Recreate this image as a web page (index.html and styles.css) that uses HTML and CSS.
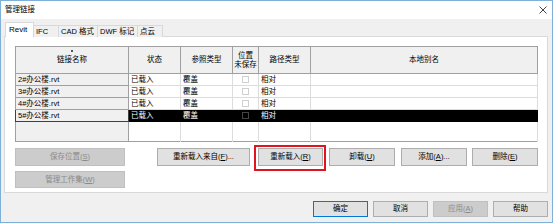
FILE: index.html
```html
<!DOCTYPE html>
<html lang="zh">
<head>
<meta charset="utf-8">
<title>管理链接</title>
<link rel="stylesheet" href="styles.css">
</head>
<body>
<div class="window">
  <div class="titlebar">
    <span class="title">管理链接</span>
    <svg class="close" width="8" height="8" viewBox="0 0 8 8"><path d="M0.5 0.5 L7.5 7.5 M7.5 0.5 L0.5 7.5" stroke="#444" stroke-width="1" fill="none"/></svg>
  </div>
  <div class="body">
    <div class="tabs">
      <div class="tab active t-revit">Revit</div>
      <div class="tab t-ifc">IFC</div>
      <div class="tab t-cad">CAD 格式</div>
      <div class="tab t-dwf">DWF 标记</div>
      <div class="tab t-pc">点云</div>
    </div>
    <div class="panel">
      <table class="grid">
        <colgroup>
          <col class="c-name"><col class="c-status"><col class="c-ref"><col class="c-pos"><col class="c-path"><col class="c-alias">
        </colgroup>
        <thead>
          <tr>
            <th class="h-name"><span class="sortdot"></span>链接名称</th>
            <th>状态</th>
            <th>参照类型</th>
            <th class="h-pos">位置<br>未保存</th>
            <th>路径类型</th>
            <th>本地别名</th>
          </tr>
        </thead>
        <tbody>
          <tr>
            <td class="name">2#办公楼.rvt</td><td>已载入</td><td>覆盖</td><td class="chk"><span class="box"></span></td><td>相对</td><td></td>
          </tr>
          <tr>
            <td class="name">3#办公楼.rvt</td><td>已载入</td><td>覆盖</td><td class="chk"><span class="box"></span></td><td>相对</td><td></td>
          </tr>
          <tr>
            <td class="name">4#办公楼.rvt</td><td>已载入</td><td>覆盖</td><td class="chk"><span class="box"></span></td><td>相对</td><td></td>
          </tr>
          <tr class="selected">
            <td class="name">5#办公楼.rvt</td><td>已载入</td><td>覆盖</td><td class="chk"><span class="box"></span></td><td>相对</td><td></td>
          </tr>
          <tr class="filler">
            <td class="name"></td><td></td><td></td><td></td><td></td><td></td>
          </tr>
        </tbody>
      </table>
      <div class="actions">
        <div class="leftcol">
          <button class="btn wide" disabled>保存位置(<u>S</u>)</button>
          <button class="btn wide" disabled>管理工作集(<u>W</u>)</button>
        </div>
        <div class="rightrow">
          <button class="btn b-from">重新载入来自(<u>F</u>)...</button>
          <button class="btn b-reload highlight">重新载入(<u>R</u>)</button>
          <button class="btn b-std">卸载(<u>U</u>)</button>
          <button class="btn b-std">添加(<u>A</u>)...</button>
          <button class="btn b-std b-del">删除(<u>E</u>)</button>
        </div>
      </div>
    </div>
    <div class="footer">
      <button class="btn fbtn default">确定</button>
      <button class="btn fbtn">取消</button>
      <button class="btn fbtn" disabled>应用(<u>A</u>)</button>
      <button class="btn fbtn">帮助</button>
    </div>
  </div>
</div>
</body>
</html>
```

FILE: styles.css
```css
html, body {
  margin: 0;
  padding: 0;
  background: #ffffff;
}

.window {
  width: 553px;
  height: 223px;
  box-sizing: border-box;
  border: 1px solid #7fb0da;
  display: flex;
  flex-direction: column;
  font-family: "Liberation Sans", "Noto Sans CJK SC", sans-serif;
  font-size: 8px;
  color: #000;
}

.titlebar {
  height: 18px;
  flex: 0 0 18px;
  background: #ffffff;
  display: flex;
  align-items: center;
  justify-content: space-between;
  padding: 0 5px 0 4px;
}

.title {
  font-size: 7.5px;
  line-height: 1;
}

.close {
  display: block;
}

.body {
  flex: 1;
  background: #f0f0f0;
  display: flex;
  flex-direction: column;
  padding: 4px 4px 0 3px;
}

.tabs {
  display: flex;
  align-items: flex-end;
  height: 14px;
  padding-left: 1px;
  position: relative;
  z-index: 1;
  margin-bottom: -1px;
}

.tab {
  box-sizing: border-box;
  height: 12px;
  line-height: 11px;
  padding-left: 2px;
  border: 1px solid #d9d9d9;
  border-bottom: none;
  border-left: none;
  background: #f0f0f0;
  white-space: nowrap;
  overflow: hidden;
  font-size: 7.5px;
}

.tab.active {
  height: 15px;
  line-height: 13px;
  background: #ffffff;
  border-left: 1px solid #d9d9d9;
  padding-left: 3px;
  font-size: 8px;
}

.t-revit { width: 29px; }
.t-ifc { width: 25px; }
.t-cad { width: 39px; }
.t-dwf { width: 40px; }
.t-pc { width: 25px; }

.panel {
  box-sizing: border-box;
  height: 157px;
  background: #ffffff;
  border: 1px solid #d9d9d9;
  padding: 9px 9px 0 10px;
  display: flex;
  flex-direction: column;
}

.grid {
  border-collapse: collapse;
  table-layout: fixed;
  width: 522px;
  border: 1px solid #a0a0a0;
}

.c-name { width: 113px; }
.c-status { width: 52px; }
.c-ref { width: 52px; }
.c-pos { width: 26px; }
.c-path { width: 52px; }
.c-alias { width: 227px; }

.grid th {
  height: 26px;
  padding: 0;
  background: #f0f0f0;
  border: 1px solid #a0a0a0;
  font-weight: normal;
  text-align: center;
  vertical-align: middle;
  line-height: 10px;
  font-size: 7.5px;
}

.grid th.h-name {
  position: relative;
}

.sortdot {
  position: absolute;
  left: 55px;
  top: 3px;
  width: 2px;
  height: 2px;
  background: #555;
}

.grid th.h-pos {
  line-height: 9px;
}

.grid td {
  height: 11px;
  padding: 0 0 0 2px;
  border: 1px solid #dcdcdc;
  line-height: 10px;
  font-size: 7.5px;
  white-space: nowrap;
  overflow: hidden;
}

.grid td.name {
  background: #f0f0f0;
  border: 1px solid #a0a0a0;
}

.grid td.chk {
  padding: 0;
  text-align: center;
}

.box {
  display: inline-block;
  width: 5px;
  height: 5px;
  border: 1px solid #d0d0d0;
  vertical-align: middle;
}

.grid tr.selected td {
  background: #000000;
  color: #ffffff;
  border-color: #000000;
}

.grid tr.selected td.name {
  background: #f0f0f0;
  color: #000;
  border: 1px solid #404040;
}

.grid tr.selected .box {
  border-color: #444;
}

.grid tr.filler td {
  height: 19px;
  border-top: 1px solid #dcdcdc;
  border-bottom: none;
}

.grid tr.filler td.name {
  border-bottom: 1px solid #a0a0a0;
}

.actions {
  display: flex;
  margin-top: 6px;
}

.leftcol {
  display: flex;
  flex-direction: column;
  gap: 5px;
  width: 110px;
}

.rightrow {
  display: flex;
  align-items: flex-start;
  margin-left: 32px;
}

.btn {
  appearance: none;
  box-sizing: border-box;
  margin: 0;
  padding: 0;
  font-family: "Liberation Sans", "Noto Sans CJK SC", sans-serif;
  font-size: 7.5px;
  color: #000;
  background: #e1e1e1;
  border: 1px solid #adadad;
  height: 18px;
  line-height: 1;
  white-space: nowrap;
}

.btn:disabled {
  background: #cccccc;
  border-color: #bfbfbf;
  color: #8a8a8a;
}

.btn.wide {
  width: 110px;
}

.leftcol .btn.wide + .btn.wide {
  height: 17px;
}

.b-from {
  width: 93px;
}

.b-reload {
  width: 65px;
  margin-left: 8px;
}

.b-std {
  width: 66px;
  margin-left: 6px;
}

.b-del {
  margin-left: 5px;
}

.highlight {
  position: relative;
}

.highlight::after {
  content: "";
  position: absolute;
  left: -5px;
  right: -4px;
  top: -4px;
  bottom: -6px;
  border: 2px solid #e0141e;
}

.footer {
  display: flex;
  justify-content: flex-end;
  gap: 5px;
  padding-top: 8px;
}

.btn.fbtn {
  width: 55px;
  height: 16px;
}

.btn.default {
  border-color: #0078d7;
}
```
